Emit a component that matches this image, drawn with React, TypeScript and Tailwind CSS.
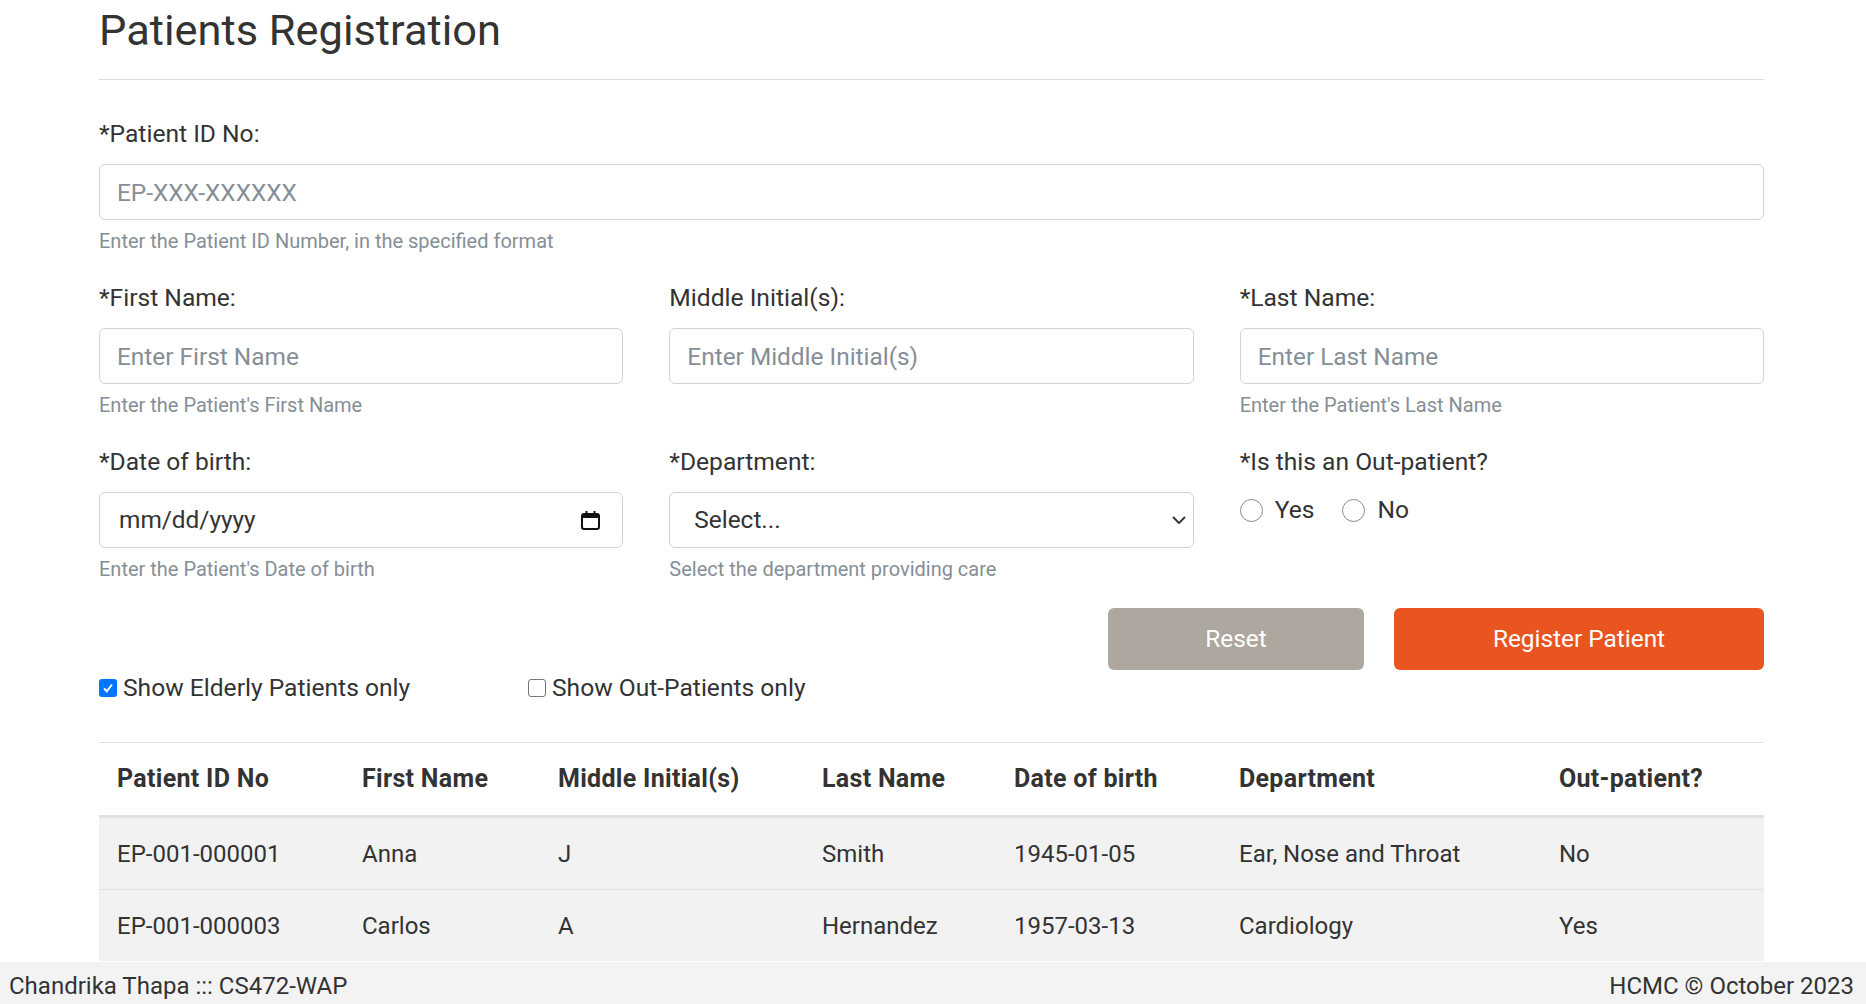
import React from "react";

const font = { fontFamily: "Roboto, 'Liberation Sans', sans-serif" };

const patients = [
  { id: "EP-001-000001", first: "Anna", middle: "J", last: "Smith", dob: "1945-01-05", dept: "Ear, Nose and Throat", out: "No" },
  { id: "EP-001-000003", first: "Carlos", middle: "A", last: "Hernandez", dob: "1957-03-13", dept: "Cardiology", out: "Yes" },
];

const headers = ["Patient ID No", "First Name", "Middle Initial(s)", "Last Name", "Date of birth", "Department", "Out-patient?"];

function Label({ children }: { children: React.ReactNode }) {
  return <label className="block mb-[12px] text-[24.6px] leading-[36px] text-[#333]">{children}</label>;
}

function Help({ children }: { children: React.ReactNode }) {
  return <div className="mt-[6px] text-[20px] leading-[30px] text-[#868e96]">{children}</div>;
}

function TextInput({ placeholder }: { placeholder: string }) {
  return (
    <input
      type="text"
      placeholder={placeholder}
      className="block w-full h-[56px] rounded-[6px] border border-[#ced4da] bg-white px-[17px] text-[24.4px] text-[#333] outline-none placeholder:text-[#868e96]"
      style={font}
    />
  );
}

function CalendarIcon() {
  return (
    <svg width="19" height="19" viewBox="0 0 19 19" fill="none">
      <rect x="1" y="3" width="17" height="15" rx="2" stroke="#111" strokeWidth="2" />
      <rect x="1" y="3" width="17" height="4" fill="#111" />
      <rect x="4.5" y="0" width="2" height="4" fill="#111" />
      <rect x="12.5" y="0" width="2" height="4" fill="#111" />
    </svg>
  );
}

function Checkbox({ checked, label }: { checked: boolean; label: string }) {
  return (
    <label className="flex items-center gap-[6px] text-[24.6px]">
      {checked ? (
        <span className="flex h-[18px] w-[18px] items-center justify-center rounded-[3px] bg-[#0075ff]">
          <svg width="12" height="12" viewBox="0 0 12 12" fill="none">
            <path d="M2 6.5 L4.8 9.3 L10 2.5" stroke="white" strokeWidth="2" />
          </svg>
        </span>
      ) : (
        <span className="h-[18px] w-[18px] rounded-[3px] border-[1.5px] border-[#767676] bg-white" />
      )}
      <span>{label}</span>
    </label>
  );
}

function Radio({ label }: { label: string }) {
  return (
    <label className="flex items-center gap-[12px] text-[24.6px]">
      <span className="h-[23px] w-[23px] rounded-full border border-[#8a8a8a] bg-white" />
      <span>{label}</span>
    </label>
  );
}

export default function App() {
  return (
    <div className="flex h-screen flex-col overflow-hidden bg-white text-[24px] leading-[36px] text-[#333]" style={font}>
      <main className="flex-1 overflow-hidden">
        <div className="ml-[99px] w-[1665px]">
          <h3 className="mt-[5px] text-[43.4px] font-normal leading-[1.2] text-[#333]">Patients Registration</h3>
          <div className="mt-[22px] h-px bg-[#dcdcdc]" />

          <form className="mt-[36px]">
            <div>
              <Label>*Patient ID No:</Label>
              <TextInput placeholder="EP-XXX-XXXXXX" />
              <Help>Enter the Patient ID Number, in the specified format</Help>
            </div>

            <div className="mt-[24px] grid grid-cols-3 gap-x-[46px]">
              <div>
                <Label>*First Name:</Label>
                <TextInput placeholder="Enter First Name" />
                <Help>Enter the Patient's First Name</Help>
              </div>
              <div>
                <Label>Middle Initial(s):</Label>
                <TextInput placeholder="Enter Middle Initial(s)" />
              </div>
              <div>
                <Label>*Last Name:</Label>
                <TextInput placeholder="Enter Last Name" />
                <Help>Enter the Patient's Last Name</Help>
              </div>
            </div>

            <div className="mt-[24px] grid grid-cols-3 gap-x-[46px]">
              <div>
                <Label>*Date of birth:</Label>
                <div className="flex h-[56px] items-center justify-between rounded-[6px] border border-[#ced4da] bg-white pl-[19px] pr-[22px] text-[24.4px]">
                  <span className="text-[#333]">mm/dd/yyyy</span>
                  <CalendarIcon />
                </div>
                <Help>Enter the Patient's Date of birth</Help>
              </div>
              <div>
                <Label>*Department:</Label>
                <div className="flex h-[56px] items-center justify-between rounded-[6px] border border-[#ced4da] bg-white pl-[24px] pr-[7px] text-[24.4px]">
                  <span className="text-[#333]">Select...</span>
                  <svg width="14" height="9" viewBox="0 0 14 9" fill="none">
                    <path d="M1.5 1.5 L7 7 L12.5 1.5" stroke="#343a40" strokeWidth="2" strokeLinecap="round" strokeLinejoin="round" />
                  </svg>
                </div>
                <Help>Select the department providing care</Help>
              </div>
              <div>
                <Label>*Is this an Out-patient?</Label>
                <div className="flex h-[36px] items-center gap-[28px]">
                  <Radio label="Yes" />
                  <Radio label="No" />
                </div>
              </div>
            </div>

            <div className="mt-[24px] flex justify-end gap-[30px]">
              <button type="button" className="h-[62px] w-[256px] rounded-[6px] bg-[#aea79f] text-[24.4px] text-white">
                Reset
              </button>
              <button type="button" className="h-[62px] w-[370px] rounded-[6px] bg-[#e95420] text-[24.4px] text-white">
                Register Patient
              </button>
            </div>

            <div className="flex h-[36px] items-center">
              <div className="w-[429px]">
                <Checkbox checked label="Show Elderly Patients only" />
              </div>
              <Checkbox checked={false} label="Show Out-Patients only" />
            </div>
          </form>

          <table className="mt-[36px] w-full table-fixed border-collapse border-t border-[#dee2e6] text-left">
            <colgroup>
              <col className="w-[245px]" />
              <col className="w-[196px]" />
              <col className="w-[264px]" />
              <col className="w-[192px]" />
              <col className="w-[225px]" />
              <col className="w-[320px]" />
              <col className="w-[223px]" />
            </colgroup>
            <thead>
              <tr className="border-b-[3px] border-[#dee2e6]">
                {headers.map((h) => (
                  <th key={h} className="px-[18px] py-[18px] text-[25px] font-bold leading-[36px] tracking-[0.3px]">
                    {h}
                  </th>
                ))}
              </tr>
            </thead>
            <tbody>
              {patients.map((p, r) => (
                <tr key={p.id} className={r === 0 ? "border-b border-[#dee2e6] bg-[#f2f2f2]" : "bg-[#f2f2f2]"}>
                  {[p.id, p.first, p.middle, p.last, p.dob, p.dept, p.out].map((v, i) => (
                    <td key={i} className="px-[18px] pt-[19px] pb-[17px] leading-[35px]">
                      {v}
                    </td>
                  ))}
                </tr>
              ))}
            </tbody>
          </table>
        </div>
      </main>

      <footer className="flex h-[42px] shrink-0 items-center justify-between bg-[#f3f3f3] pl-[9px] pr-[12px] pt-[5px] text-[24px] text-[#333]">
        <span>Chandrika Thapa ::: CS472-WAP</span>
        <span>HCMC © October 2023</span>
      </footer>
    </div>
  );
}
